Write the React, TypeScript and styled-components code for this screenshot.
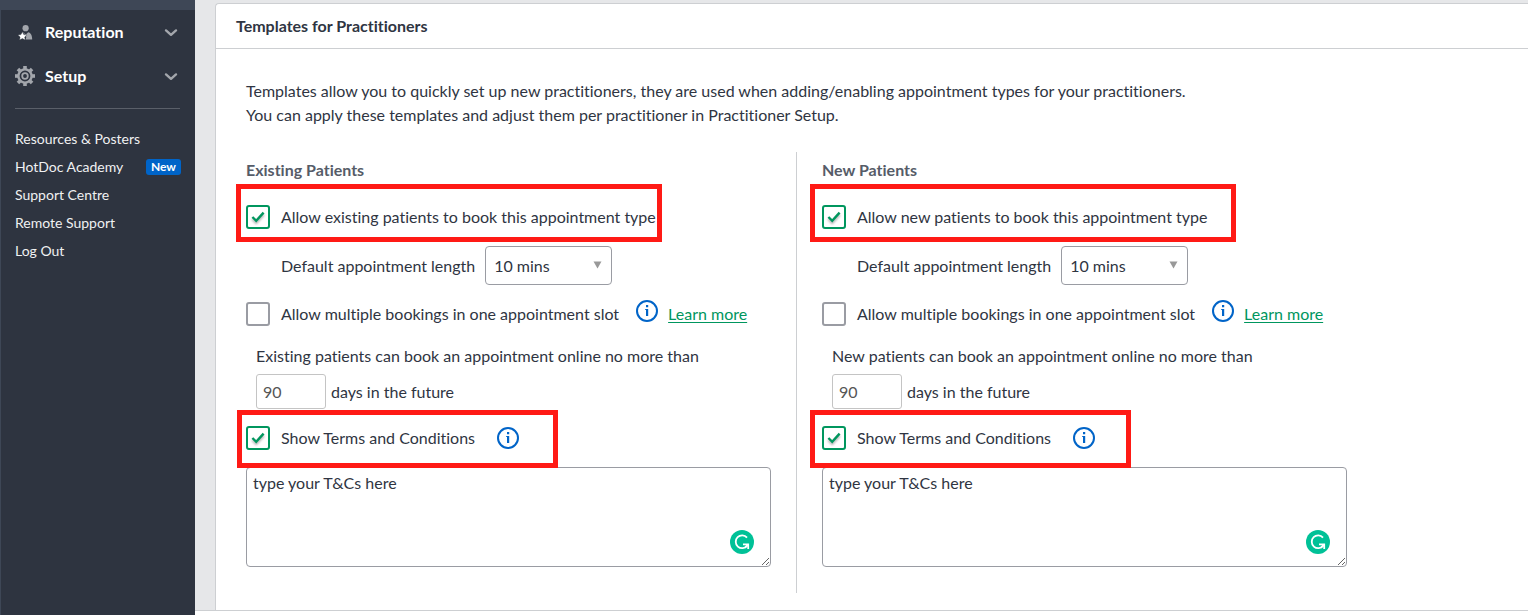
import React, { useId } from 'react';
import styled, { createGlobalStyle } from 'styled-components';

const color = {
  navy: '#2e3440',
  navyLight: '#3e4756',
  text: '#2f3542',
  muted: '#565c68',
  line: '#cdcfd2',
  control: '#9a9ca3',
  green: '#00965e',
  blue: '#0064c8',
  red: '#ff1a15',
};

const GlobalStyle = createGlobalStyle`
  *, *::before, *::after { box-sizing: border-box; }
  body {
    margin: 0;
    font-family: Lato, 'Liberation Sans', sans-serif;
    font-size: 16px;
    line-height: 24px;
    font-variant-ligatures: none;
    color: ${color.text};
    background: #e6e7e9;
  }
  input, select, textarea, button { font: inherit; font-variant-ligatures: none; color: inherit; }
`;

const Page = styled.div`
  display: flex;
  min-height: 100vh;
`;

const Sidebar = styled.nav`
  flex: 0 0 195px;
  background: ${color.navy};
  border-left: 1px solid ${color.navyLight};
  color: #fff;
`;

const SidebarTop = styled.div`
  height: 10px;
  background: ${color.navyLight};
`;

const MenuButton = styled.button`
  display: flex;
  align-items: center;
  gap: 10px;
  width: 100%;
  height: 44px;
  padding: 0 17px 0 14px;
  border: 0;
  background: none;
  color: #fff;
  font-weight: 700;
  text-align: left;
  cursor: pointer;
`;

const MenuLabel = styled.span`
  flex: 1;
`;

const Rule = styled.hr`
  margin: 10px 15px 16px 14px;
  border: 0;
  border-top: 1px solid #5a5f69;
`;

const LinkList = styled.ul`
  margin: 0;
  padding: 0 14px;
  list-style: none;
`;

const LinkItem = styled.li`
  display: flex;
  align-items: center;
  justify-content: space-between;
  height: 28px;
`;

const SideLink = styled.a`
  color: #f0f1f2;
  font-size: 14px;
  text-decoration: none;
`;

const Badge = styled.span`
  padding: 0 5px;
  border-radius: 3px;
  background: ${color.blue};
  font-size: 12px;
  font-weight: 700;
  line-height: 16px;
`;

const Main = styled.main`
  display: flex;
  flex: 1;
  flex-direction: column;
  min-width: 0;
  padding-top: 3px;
`;

const Card = styled.section`
  flex: 1;
  margin-left: 20px;
  border: 1px solid ${color.line};
  border-width: 1px 0 0 1px;
  border-radius: 4px 0 0 0;
  background: #fff;
`;

const CardTitle = styled.h2`
  margin: 0;
  padding: 10px 20px;
  border-bottom: 1px solid ${color.line};
  font-size: 16px;
  font-weight: 700;
`;

const CardBody = styled.div`
  padding: 30px 30px 17px;
`;

const Intro = styled.p`
  margin: 0 0 25px;
`;

const Columns = styled.div`
  display: grid;
  grid-template-columns: 1fr 1fr;
  max-width: 1102px;
`;

const Column = styled.section`
  padding: 0 0 26px 25px;

  &:first-child {
    padding: 0 25px 26px 0;
    border-right: 1px solid ${color.line};
  }
`;

const ColumnTitle = styled.h3`
  margin: 0;
  font-size: 16px;
  font-weight: 700;
  line-height: 36px;
  color: ${color.muted};
`;

const Row = styled.div`
  position: relative;
  display: flex;
  align-items: center;
  height: 58px;
`;

const Highlight = styled.span<{ $width: number; $outset: number }>`
  position: absolute;
  z-index: 1;
  top: -4px;
  left: -${(p) => p.$outset}px;
  width: ${(p) => p.$width}px;
  height: 58px;
  border: 5px solid ${color.red};
  pointer-events: none;
`;

const LowerHighlight = styled(Highlight)`
  top: 1px;
`;

const CheckLabel = styled.label`
  display: flex;
  align-items: center;
  gap: 11px;
`;

const CheckWrap = styled.span`
  display: grid;
  width: 24px;
  height: 24px;

  > * { grid-area: 1 / 1; }
  svg { visibility: hidden; pointer-events: none; filter: drop-shadow(0 2px 1px rgba(0, 0, 0, 0.3)); }
  input:checked + svg { visibility: visible; }
`;

const Checkbox = styled.input`
  width: 24px;
  height: 24px;
  margin: 0;
  appearance: none;
  border: 2px solid ${color.control};
  border-radius: 3px;
  background: #fff;

  &:checked { border-color: ${color.green}; }
`;

const LengthRow = styled.div`
  display: flex;
  align-items: center;
  gap: 10px;
  padding-left: 35px;
`;

const SelectWrap = styled.span`
  position: relative;
  display: flex;

  svg { position: absolute; top: 15px; right: 10px; pointer-events: none; }
`;

const Select = styled.select`
  width: 127px;
  height: 39px;
  padding: 0 8px;
  appearance: none;
  border: 1px solid ${color.control};
  border-radius: 4px;
  background: #fff;
`;

const InfoButton = styled.button<{ $gap: number }>`
  display: flex;
  margin: 0 10px 0 ${(p) => p.$gap}px;
  padding: 0;
  border: 0;
  background: none;
  cursor: pointer;
`;

const RaisedInfo = styled.span`
  display: flex;
  padding-bottom: 6px;
`;

const GreenLink = styled.a`
  color: ${color.green};
  text-underline-offset: 2px;
`;

const LimitText = styled.label`
  display: block;
  padding-left: 10px;
  line-height: 26px;
`;

const LimitRow = styled.div`
  display: flex;
  align-items: center;
  gap: 5px;
  margin-top: 5px;
  padding-left: 10px;
`;

const DaysInput = styled.input`
  width: 70px;
  height: 35px;
  padding: 0 6px;
  border: 1px solid #c4c4c4;
  border-radius: 3px;
  color: #555;
`;

const TermsBox = styled.div`
  position: relative;
  display: flex;
  max-width: 525px;
`;

const TermsArea = styled.textarea`
  width: 100%;
  height: 100px;
  padding: 3px 6px;
  border: 1px solid ${color.control};
  border-radius: 4px;
  background: #fff;
`;

const WriterButton = styled.button`
  position: absolute;
  right: 17px;
  bottom: 13px;
  display: flex;
  padding: 0;
  border: 0;
  background: none;
`;

const Footer = styled.footer`
  height: 5px;
  border-top: 1px solid ${color.line};
  background: #fff;
`;

const ReputationIcon = () => (
  <svg width="20" height="20" viewBox="0 0 20 20" aria-hidden="true">
    <circle cx="10.6" cy="6.2" r="3.1" fill="#a3a6ac" />
    <path d="M8 10.2 10.8 12.6 13.2 10.2C15.8 10.8 17.2 13 17.2 17.6H10.6L11.3 15 9.3 11.8 7.6 10.6Z" fill="#a3a6ac" />
    <path d="M7.4 9.8 8.8 12.6 11.9 13 9.7 15 10.2 18 7.4 16.6 4.6 18 5.1 15 2.9 13 6 12.6Z" fill="#fff" stroke={color.navy} strokeWidth="0.4" />
  </svg>
);

const GearIcon = () => (
  <svg width="20" height="20" viewBox="0 0 20 20" fill="none" stroke="#a3a6ac" aria-hidden="true">
    <circle cx="10" cy="10" r="6.6" strokeWidth="2.4" />
    <circle cx="10" cy="10" r="2.8" strokeWidth="1.8" />
    {[0, 45, 90, 135, 180, 225, 270, 315].map((a) => (
      <path key={a} d="M10 0V3" strokeWidth="3.6" transform={`rotate(${a} 10 10)`} />
    ))}
  </svg>
);

const Chevron = () => (
  <svg width="14" height="14" viewBox="0 0 14 14" fill="none" aria-hidden="true">
    <path d="M2 5.4 7 9.8 12 5.4" stroke="#a3a6ac" strokeWidth="2.4" strokeLinecap="round" strokeLinejoin="round" />
  </svg>
);

const InfoIcon = () => (
  <svg width="22" height="22" viewBox="0 0 22 22" fill="none" aria-hidden="true">
    <circle cx="11" cy="11" r="10" stroke={color.blue} strokeWidth="2" />
    <path d="M10 5h2.2v2.2H10zM9.2 9h3v7h-2.2v-6h-0.8z" fill={color.blue} />
  </svg>
);

const Tick = () => (
  <svg width="24" height="24" viewBox="0 0 24 24" fill="none" aria-hidden="true">
    <path d="M6.4 12 10.2 15.8 17.6 7.6" stroke={color.green} strokeWidth="2.4" />
  </svg>
);

const WriterIcon = () => (
  <svg width="24" height="24" viewBox="0 0 24 24" fill="none" aria-hidden="true">
    <circle cx="12" cy="12" r="12" fill="#00c197" />
    <path d="M17 7.6A6.4 6.4 0 1 0 17.2 15.7" stroke="#fff" strokeWidth="1.8" />
    <path d="M13 14.4H18.2V19" stroke="#fff" strokeWidth="1.8" />
    <path d="M18 14.4 15 17.6" stroke="#fff" strokeWidth="1.6" />
  </svg>
);

type CheckFieldProps = { label: string; checked?: boolean };

const CheckField = ({ label, checked }: CheckFieldProps) => (
  <CheckLabel>
    <CheckWrap>
      <Checkbox type="checkbox" defaultChecked={checked} />
      <Tick />
    </CheckWrap>
    {label}
  </CheckLabel>
);

type TemplateProps = { kind: 'Existing' | 'New'; outset: number; termsOutset: number };

const PatientTemplate = ({ kind, outset, termsOutset }: TemplateProps) => {
  const id = useId();
  return (
    <Column>
      <ColumnTitle>{kind} Patients</ColumnTitle>
      <Row>
        <CheckField label={`Allow ${kind.toLowerCase()} patients to book this appointment type`} checked />
        <Highlight $width={426} $outset={outset} />
      </Row>
      <LengthRow>
        <label htmlFor={`${id}-length`}>Default appointment length</label>
        <SelectWrap>
          <Select id={`${id}-length`} defaultValue="10">
            <option value="10">10 mins</option>
            <option value="15">15 mins</option>
            <option value="30">30 mins</option>
          </Select>
          <svg width="9" height="8" viewBox="0 0 9 8" aria-hidden="true">
            <path d="M0.5 0.5h8L4.5 7.5z" fill="#999" />
          </svg>
        </SelectWrap>
      </LengthRow>
      <Row>
        <CheckField label="Allow multiple bookings in one appointment slot" />
        <RaisedInfo>
          <InfoButton type="button" $gap={17} aria-label="About multiple bookings"><InfoIcon /></InfoButton>
        </RaisedInfo>
        <GreenLink href="#learn-more">Learn more</GreenLink>
      </Row>
      <LimitText htmlFor={`${id}-days`}>{kind} patients can book an appointment online no more than</LimitText>
      <LimitRow>
        <DaysInput id={`${id}-days`} type="text" inputMode="numeric" defaultValue="90" />
        <span>days in the future</span>
      </LimitRow>
      <Row>
        <CheckField label="Show Terms and Conditions" checked />
        <InfoButton type="button" $gap={22} aria-label="About terms and conditions"><InfoIcon /></InfoButton>
        <LowerHighlight $width={321} $outset={termsOutset} />
      </Row>
      <TermsBox>
        <TermsArea aria-label={`${kind} patient terms and conditions`} defaultValue="type your T&Cs here" />
        <WriterButton type="button" aria-label="Check writing"><WriterIcon /></WriterButton>
      </TermsBox>
    </Column>
  );
};

const links = [
  { label: 'Resources & Posters' },
  { label: 'HotDoc Academy', badge: 'New' },
  { label: 'Support Centre' },
  { label: 'Remote Support' },
  { label: 'Log Out' },
];

export default function App() {
  return (
    <>
      <GlobalStyle />
      <Page>
        <Sidebar>
          <SidebarTop />
          <MenuButton type="button">
            <ReputationIcon />
            <MenuLabel>Reputation</MenuLabel>
            <Chevron />
          </MenuButton>
          <MenuButton type="button">
            <GearIcon />
            <MenuLabel>Setup</MenuLabel>
            <Chevron />
          </MenuButton>
          <Rule />
          <LinkList>
            {links.map(({ label, badge }) => (
              <LinkItem key={label}>
                <SideLink href="#">{label}</SideLink>
                {badge && <Badge>{badge}</Badge>}
              </LinkItem>
            ))}
          </LinkList>
        </Sidebar>
        <Main>
          <Card>
            <CardTitle>Templates for Practitioners</CardTitle>
            <CardBody>
              <Intro>
                Templates allow you to quickly set up new practitioners, they are used when adding/enabling appointment types for your practitioners.
                <br />
                You can apply these templates and adjust them per practitioner in Practitioner Setup.
              </Intro>
              <Columns>
                <PatientTemplate kind="Existing" outset={10} termsOutset={9} />
                <PatientTemplate kind="New" outset={12} termsOutset={12} />
              </Columns>
            </CardBody>
          </Card>
          <Footer />
        </Main>
      </Page>
    </>
  );
}
